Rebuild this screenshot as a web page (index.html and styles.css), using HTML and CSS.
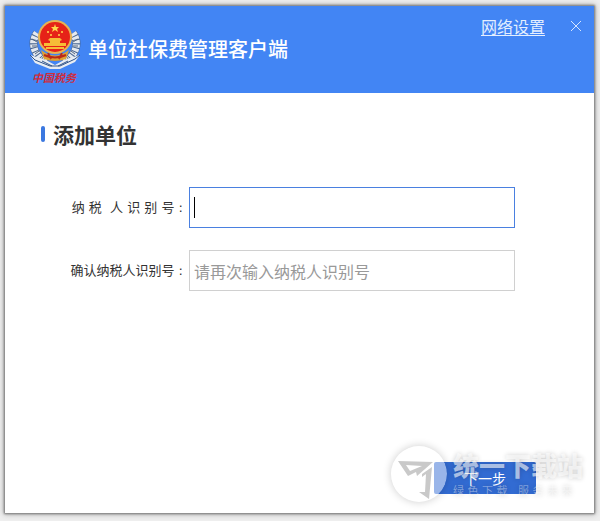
FILE: index.html
```html
<!DOCTYPE html>
<html lang="zh-CN">
<head>
<meta charset="utf-8">
<title>单位社保费管理客户端</title>
<link rel="stylesheet" href="styles.css">
</head>
<body>
<div class="window">
  <header class="titlebar">
    <svg class="emblem" viewBox="0 0 54 70" aria-hidden="true">
      <g fill="none" stroke="#48658f" stroke-width="8">
        <path d="M9 15C2 25 6 38 19 45"/>
        <path d="M45 15C52 25 48 38 35 45"/>
      </g>
      <g fill="none" stroke="#e4e9ef" stroke-width="7" stroke-dasharray="3 1">
        <path d="M9 15C2 25 6 38 19 45"/>
        <path d="M45 15C52 25 48 38 35 45"/>
      </g>
      <g fill="none" stroke="#53657d" stroke-width="1">
        <path d="M4 21l5 3M4 28l5 0M7 36l4-3M13 42l3-4M50 21l-5 3M50 28h-5M47 36l-4-3M41 42l-3-4"/>
      </g>
      <path d="M2 37L18 42L27 47L36 42L52 37L47 44L32 51H22L7 45Z" fill="#e8edf3"/>
      <path d="M2 37L7 42L22 48H32L47 41L52 37M14 43L24 48M40 43L30 48" fill="none" stroke="#315489" stroke-width="1"/>
      <path d="M13 32Q27 43 41 32L38 41Q27 45 16 41Z" fill="#dca035"/>
      <path d="M16 37Q27 42 38 37M20 35L23 41M34 35L31 41" fill="none" stroke="#ba2918" stroke-width="2"/>
      <circle cx="27" cy="19" r="17" fill="#e8b352"/>
      <circle cx="27" cy="19" r="15" fill="#e62218"/>
      <path d="M27 6l1 3h3l-2 2 1 3-3-2-3 2 1-3-2-2h3Z" fill="#ffd84c"/>
      <g fill="#ffd84c"><circle cx="20" cy="14" r="1"/><circle cx="34" cy="14" r="1"/><circle cx="23" cy="17" r="1"/><circle cx="31" cy="17" r="1"/></g>
      <path d="M22 20H32L34 22L32 23V25H38V28H16V25H22V23L20 22Z" fill="#f6bd37"/>
      <path d="M18 30H36" stroke="#f6bd37" stroke-width="2"/>
      <text class="emblem-name" x="4" y="64">中国税务</text>
    </svg>
    <h1 class="app-name">单位社保费管理客户端</h1>
    <a class="network" href="#">网络设置</a>
    <button class="close" type="button" aria-label="关闭">
      <svg viewBox="0 0 12 12" aria-hidden="true"><path d="M1 1L11 11M11 1L1 11"/></svg>
    </button>
  </header>
  <main class="content">
    <h2 class="section-title">添加单位</h2>
    <form class="form">
      <label class="label" for="taxpayer">纳 税  人 识 别 号 :</label>
      <div class="field">
        <input class="input input-active" id="taxpayer" type="text">
        <span class="caret"></span>
      </div>
      <label class="label" for="confirm">确认纳税人识别号 :</label>
      <div class="field">
        <input class="input" id="confirm" type="text" placeholder="请再次输入纳税人识别号">
      </div>
    </form>
    <div class="actions">
      <button class="next" type="button">下一步</button>
    </div>
  </main>
  <div class="watermark">
    <svg class="watermark-logo" viewBox="0 0 56 56" aria-hidden="true">
      <circle cx="28" cy="28" r="28" fill="#fff" fill-opacity=".5"/>
      <path fill-rule="evenodd" d="M7 15L42 16L26 30L25 26L17 30ZM15 19L19 25L31 20Z" fill="#888" fill-opacity=".45"/>
      <path d="M41 21L38 53L28 46L34 46L35 28L31 31L31 28Z" fill="#888" fill-opacity=".45"/>
    </svg>
    <div class="watermark-text">
      <span class="watermark-name">统一下载站</span>
      <span class="watermark-slogan">绿 色 下 载   服 务 未 来</span>
    </div>
  </div>
</div>
</body>
</html>
```
FILE: styles.css
```css
* {
  box-sizing: border-box;
}

body {
  margin: 0;
  min-height: 100vh;
  padding: 6px 6px 8px 5px;
  display: flex;
  background: #efefef;
  color: #333;
  font-family: "Noto Sans CJK SC", sans-serif;
}

.window {
  position: relative;
  flex: 1;
  display: flex;
  flex-direction: column;
  background: #fff;
  box-shadow: 0 0 2px 1px #777, 0 0 6px 1px #aaa;
}

.titlebar {
  display: flex;
  align-items: flex-start;
  height: 87px;
  padding: 12px 12px 0 23px;
  background: #4285f4;
  color: #fff;
}

.emblem {
  width: 54px;
  height: 70px;
}

.emblem-name {
  fill: #cf2c3c;
  font: italic bold 11px "Noto Sans CJK SC", serif;
}

.app-name {
  flex: 1;
  margin: 16px 0 0 6px;
  font-size: 20px;
  font-weight: 500;
  line-height: 30px;
}

.network {
  color: #e4efff;
  font-size: 16px;
  line-height: 16px;
  text-underline-offset: 2px;
}

.close {
  width: 12px;
  height: 16px;
  margin-left: 25px;
  padding: 0;
  border: 0;
  background: none;
}

.close svg {
  display: block;
  width: 12px;
  height: 12px;
  fill: none;
  stroke: #d5e5ff;
}

.content {
  flex: 1;
  display: flex;
  flex-direction: column;
  padding: 26px 37px 19px 36px;
}

.section-title {
  display: flex;
  align-items: center;
  gap: 8px;
  margin: 0;
  font-size: 21px;
  line-height: 30px;
}

.section-title::before {
  content: "";
  width: 4px;
  height: 16px;
  border-radius: 2px;
  background: #3b78e0;
}

.form {
  display: grid;
  grid-template-columns: 142px 1fr;
  column-gap: 6px;
  row-gap: 22px;
  align-items: center;
  margin: 38px 42px 0 0;
}

.label {
  font-family: "DejaVu Sans", "Noto Sans CJK SC", sans-serif;
  font-size: 13px;
  line-height: 20px;
  text-align: right;
  white-space: pre;
}

.field {
  position: relative;
}

.input {
  display: block;
  width: 100%;
  height: 41px;
  padding: 0 4px;
  border: 1px solid #d0d0d0;
  outline: 0;
  background: #fff;
  font-family: inherit;
  font-size: 16px;
}

.input.input-active {
  border: 1px solid #4a80e0;
}

.input::placeholder {
  color: #999;
}

.caret {
  position: absolute;
  left: 5px;
  top: 10px;
  width: 1px;
  height: 21px;
  background: #000;
}

.actions {
  display: flex;
  justify-content: flex-end;
  margin-top: auto;
  padding-right: 21px;
}

.next {
  width: 102px;
  height: 32px;
  padding: 0;
  border: 0;
  border-radius: 2px;
  background: #326bd2;
  color: #fff;
  font-family: inherit;
  font-size: 14px;
}

.watermark {
  position: absolute;
  right: 11px;
  bottom: 9px;
  display: flex;
  align-items: center;
  gap: 6px;
  pointer-events: none;
}

.watermark-logo {
  width: 56px;
  height: 56px;
  border-radius: 50%;
  box-shadow: 0 0 8px #0003;
}

.watermark-text {
  padding-top: 6px;
  color: #ffffff99;
  text-shadow: 0 0 5px #0003;
}

.watermark-name,
.watermark-slogan {
  display: block;
  white-space: pre;
}

.watermark-name {
  font-size: 26px;
  font-weight: 900;
  line-height: 30px;
}

.watermark-slogan {
  color: #ffffff66;
  font-family: "DejaVu Sans", "Noto Sans CJK SC", sans-serif;
  font-size: 11px;
  line-height: 24px;
}
```
